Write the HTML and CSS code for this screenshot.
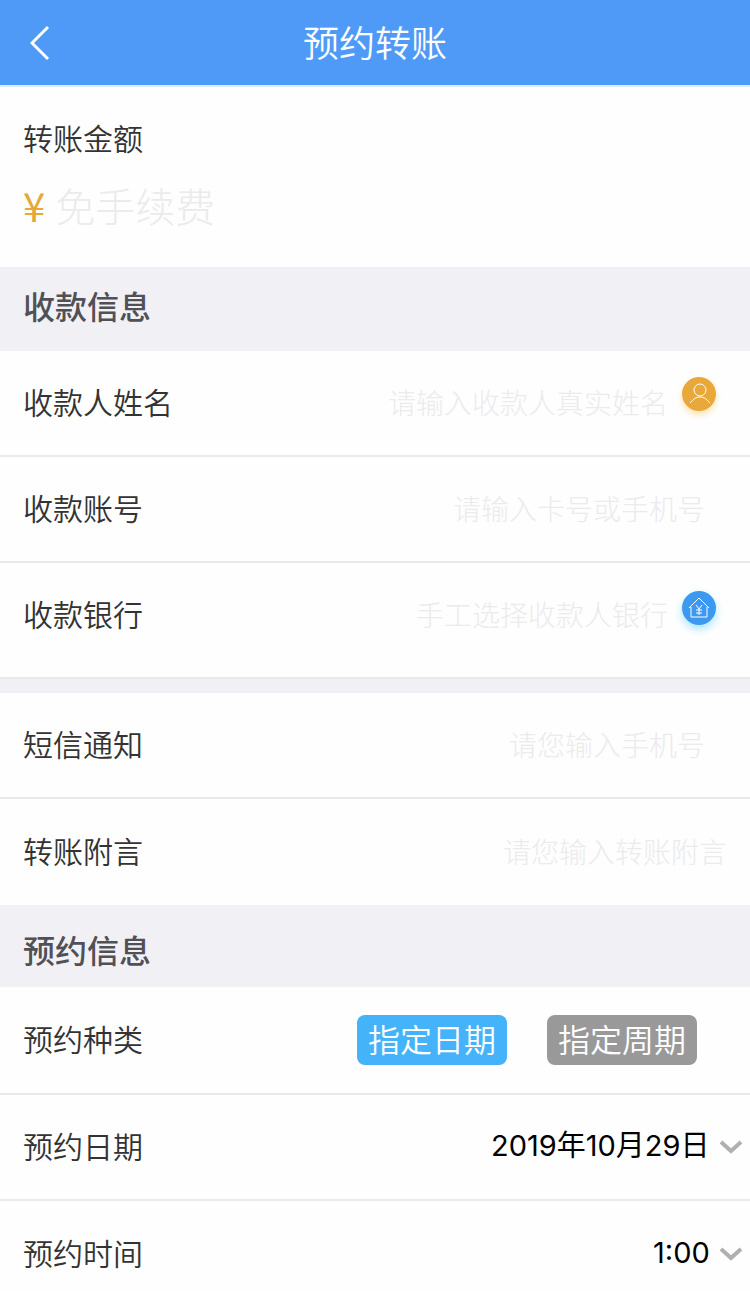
FILE: index.html
```html
<!DOCTYPE html>
<html lang="zh-CN">
<head>
  <meta charset="UTF-8" />
  <meta name="viewport" content="width=device-width, initial-scale=1.0" />
  <title>预约转账</title>
  <link rel="stylesheet" href="styles.css">
</head>
<body>
  <header class="header">
    <a class="back" href="#" aria-label="返回">
      <svg width="20" height="36" viewBox="0 0 20 36"><path d="M18 2L2 18l16 16" /></svg>
    </a>
    <h1>预约转账</h1>
  </header>

  <form>
    <div class="amount">
      <label for="amount">转账金额</label>
      <div class="amount-box">
        <span class="yen">¥</span>
        <input type="text" id="amount" placeholder="免手续费">
      </div>
    </div>

    <h2 class="title">收款信息</h2>
    <div class="row">
      <label for="name">收款人姓名</label>
      <input type="text" id="name" placeholder="请输入收款人真实姓名">
      <button type="button" class="icon person" aria-label="选择收款人">
        <svg width="34" height="34" viewBox="0 0 34 34">
          <circle cx="18" cy="13" r="6" />
          <path d="M8 26c3-3 5-6 10-6s7 3 10 6" />
        </svg>
      </button>
    </div>
    <div class="row">
      <label for="account">收款账号</label>
      <input type="text" id="account" class="inset" placeholder="请输入卡号或手机号">
    </div>
    <div class="row last bank-row">
      <label for="bank">收款银行</label>
      <input type="text" id="bank" placeholder="手工选择收款人银行">
      <button type="button" class="icon bank" aria-label="选择银行">
        <svg width="34" height="34" viewBox="0 0 34 34">
          <path d="M7 17L17 7l10 10M9 16v10h16V16" />
          <path d="M14 14l3 4 3-4M17 18v6M14 19h6M14 22h6" />
        </svg>
      </button>
    </div>

    <div class="gap"></div>
    <div class="row">
      <label for="phone">短信通知</label>
      <input type="text" id="phone" class="inset" placeholder="请您输入手机号">
    </div>
    <div class="row last">
      <label for="message">转账附言</label>
      <input type="text" id="message" placeholder="请您输入转账附言">
    </div>

    <h2 class="title title-low">预约信息</h2>
    <div class="row type-row">
      <span class="label">预约种类</span>
      <div class="types">
        <button type="button" class="type active" aria-pressed="true">指定日期</button>
        <button type="button" class="type" aria-pressed="false">指定周期</button>
      </div>
    </div>
    <div class="row pick">
      <label for="date">预约日期</label>
      <select id="date">
        <option>2019年10月29日</option>
      </select>
      <svg class="arrow" width="22" height="14" viewBox="0 0 22 14"><path d="M1 2l10 9 10-9" /></svg>
    </div>
    <div class="row last pick">
      <label for="time">预约时间</label>
      <select id="time">
        <option>1:00</option>
      </select>
      <svg class="arrow" width="22" height="14" viewBox="0 0 22 14"><path d="M1 2l10 9 10-9" /></svg>
    </div>
  </form>
</body>
</html>
```
FILE: styles.css
```css
* {
  box-sizing: border-box;
}
body {
  margin: 0;
  background: #fefefe;
  color: #333;
  font-family: "Noto Sans CJK SC", sans-serif;
  font-size: 30px;
  font-weight: 350;
  line-height: 40px;
}
input, select, button {
  margin: 0;
  padding: 0;
  border: none;
  background: none;
  font: inherit;
}
svg {
  display: block;
  fill: none;
}
.header {
  display: grid;
  grid-template-columns: 60px 1fr 60px;
  align-items: center;
  height: 87px;
  background: #4f9af7;
  border-bottom: 2px solid #dcefff;
}
.header h1 {
  margin: 0;
  padding-bottom: 4px;
  color: white;
  font-size: 36px;
  font-weight: 350;
  text-align: center;
}
.back {
  padding-left: 30px;
}
.back path {
  stroke: white;
  stroke-width: 3;
}
.amount {
  height: 180px;
  padding: 30px 23px 0;
}
.amount-box {
  display: flex;
  align-items: center;
  gap: 10px;
  margin-top: 18px;
}
.amount-box input {
  flex: 1;
  min-width: 0;
  height: 60px;
  font-size: 40px;
  font-weight: 300;
}
.yen {
  color: #e5a938;
  font-size: 40px;
  font-weight: 400;
}
input::placeholder {
  color: #ebebed;
  opacity: 1;
}
.title {
  height: 84px;
  margin: 0;
  padding: 18px 23px;
  background: #f0f0f5;
  color: #505055;
  font-size: 32px;
  font-weight: 500;
}
.title-low {
  height: 82px;
  padding-top: 24px;
}
.row {
  display: flex;
  align-items: center;
  height: 106px;
  padding: 0 23px;
  border-bottom: 2px solid #e9e9eb;
}
.row.last {
  border-bottom: none;
}
.row label, .row .label {
  padding-bottom: 4px;
}
.row input {
  flex: 1;
  min-width: 0;
  height: 60px;
  padding-bottom: 2px;
  font-size: 28px;
  font-weight: 300;
  text-align: right;
}
.row .inset {
  padding-right: 22px;
}
.row.bank-row {
  height: 114px;
  padding-bottom: 10px;
}
.gap {
  height: 16px;
  background: #f0f0f5;
  border-top: 2px solid #e9e9eb;
}
.icon {
  width: 34px;
  height: 34px;
  margin: 0 11px 14px 14px;
  border-radius: 50%;
}
.icon svg {
  stroke: white;
  stroke-width: 1;
}
.person {
  margin-bottom: 18px;
  background: #e9a83a;
  box-shadow: 0 4px 6px #fbe3b5;
}
.bank {
  background: #3d98f0;
  box-shadow: 0 4px 8px #a8e4ff;
}
.type-row {
  height: 108px;
}
.types {
  display: flex;
  gap: 40px;
  margin-left: auto;
  padding-right: 30px;
}
.type {
  width: 150px;
  height: 50px;
  padding-bottom: 4px;
  border-radius: 8px;
  background: #999;
  color: white;
  font-size: 32px;
}
.type.active {
  background: #45b3f9;
}
.row.pick {
  padding-right: 8px;
}
.pick select {
  margin-left: auto;
  padding-right: 32px;
  padding-bottom: 2px;
  appearance: none;
  color: black;
  font-family: Inter, "Noto Sans CJK SC", sans-serif;
  font-size: 29px;
  font-weight: 400;
}
.arrow {
  margin-left: -22px;
  pointer-events: none;
}
.arrow path {
  stroke: #b0b0b0;
  stroke-width: 4;
}
```
